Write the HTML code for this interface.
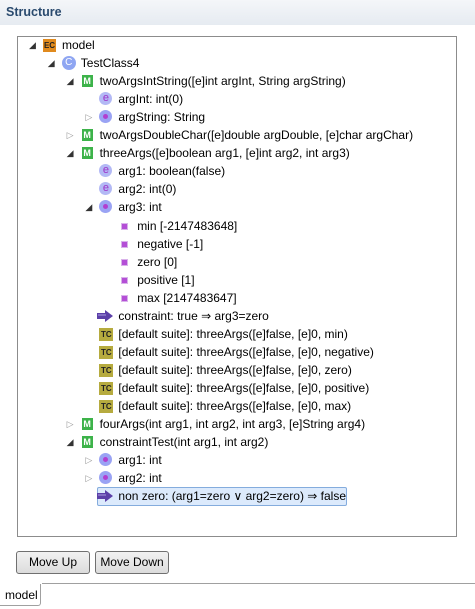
<!DOCTYPE html>
<html><head><style>
body{margin:0;width:475px;height:609px;background:#fff;font-family:"Liberation Sans",sans-serif;font-size:12px;color:#000;position:relative;overflow:hidden}
.hdr{position:absolute;left:0;top:0;width:475px;height:25px;background:linear-gradient(#f4f6f9,#e6ebf1);}
.hdr span{position:absolute;left:6px;top:5px;font-weight:bold;color:#2a4a6e;font-size:12.5px}
.tree{position:absolute;left:17px;top:36px;width:438px;height:499px;border:1px solid #8c8c8c;background:#fff}
.r{position:absolute;height:18px;line-height:18px;white-space:nowrap}
.ic{position:absolute;top:2px;width:14px;height:14px}
.tw{position:absolute;top:0;font-size:9px;line-height:18px}
.ex{color:#333}
.co{color:#999}
.ec{background:#e08a1e;color:#222;font-size:8px;font-weight:bold;line-height:13px;text-align:center;top:3px;width:13px;height:13px}
.c{border-radius:50%;background:#8fa6f2;color:#fff;font-size:10px;line-height:14px;text-align:center}
.m{background:#3db34a;color:#fff;font-size:9px;font-weight:bold;line-height:12px;text-align:center;width:11px;height:12px;top:3px;left:1px}
.e{border-radius:50%;background:#b3b9f5;color:#9d32c8;font-size:11px;line-height:12px;text-align:center;width:13px;height:13px}
.d{border-radius:50%;background:#9aa3f4;width:13px;height:13px}
.d:after{content:"";position:absolute;left:4px;top:4px;width:5px;height:5px;border-radius:50%;background:#b23fd0}
.sq{background:#b44fd6;width:7px;height:7px;top:6px;left:3px;border:1px solid #d9b2ea;box-sizing:border-box}
.tc{background:#b6ab3f;color:#222;font-size:8px;font-weight:bold;line-height:13px;text-align:center;width:14px;height:13px;top:3px}
.sel{position:absolute;left:97px;top:487px;width:248px;height:17px;background:#dceafc;border:1px solid #84acdd;border-radius:2px}
.btn{position:absolute;top:551px;height:21px;border:1px solid #707070;border-radius:3px;background:linear-gradient(#f2f2f2,#dcdcdc);text-align:center;line-height:21px;font-size:12px}
</style></head><body>
<div class="hdr"><span>Structure</span></div>
<div class="tree"></div>
<div class="sel"></div>
<div id="t"></div>
<div class="btn" style="left:16px;width:72px">Move Up</div>
<div class="btn" style="left:95px;width:72px">Move Down</div>
<div style="position:absolute;left:42px;top:583px;width:433px;border-top:1px solid #a0a0a0"></div>
<div style="position:absolute;left:0;top:584px;width:41px;height:22px;border-right:1px solid #a0a0a0;border-bottom:1px solid #a0a0a0;border-bottom-right-radius:3px;line-height:22px;padding-left:5px;box-sizing:border-box">model</div>
<script>
var rows=[
[0,'x','ec','model'],
[1,'x','c','TestClass4'],
[2,'x','m','twoArgsIntString([e]int argInt, String argString)'],
[3,'','e','argInt: int(0)'],
[3,'o','d','argString: String'],
[2,'o','m','twoArgsDoubleChar([e]double argDouble, [e]char argChar)'],
[2,'x','m','threeArgs([e]boolean arg1, [e]int arg2, int arg3)'],
[3,'','e','arg1: boolean(false)'],
[3,'','e','arg2: int(0)'],
[3,'x','d','arg3: int'],
[4,'','sq','min [-2147483648]'],
[4,'','sq','negative [-1]'],
[4,'','sq','zero [0]'],
[4,'','sq','positive [1]'],
[4,'','sq','max [2147483647]'],
[3,'','ar','constraint: true \u21D2 arg3=zero'],
[3,'','tc','[default suite]: threeArgs([e]false, [e]0, min)'],
[3,'','tc','[default suite]: threeArgs([e]false, [e]0, negative)'],
[3,'','tc','[default suite]: threeArgs([e]false, [e]0, zero)'],
[3,'','tc','[default suite]: threeArgs([e]false, [e]0, positive)'],
[3,'','tc','[default suite]: threeArgs([e]false, [e]0, max)'],
[2,'o','m','fourArgs(int arg1, int arg2, int arg3, [e]String arg4)'],
[2,'x','m','constraintTest(int arg1, int arg2)'],
[3,'o','d','arg1: int'],
[3,'o','d','arg2: int'],
[3,'','ar','non zero: (arg1=zero \u2228 arg2=zero) \u21D2 false']];
var h='';
rows.forEach(function(r,i){
 var top=36+i*18.05, tx=62+r[0]*18.8, ix=tx-19, ax=ix-14;
 h+='<div class="r" style="left:0;top:'+top+'px;width:475px">';
 if(r[1]=='x')h+='<span class="tw ex" style="left:'+ax+'px">&#9698;</span>';
 if(r[1]=='o')h+='<span class="tw co" style="left:'+ax+'px">&#9655;</span>';
 var t=r[2],inner='';
 if(t=='ec')inner='EC';if(t=='c')inner='C';if(t=='m')inner='M';if(t=='e')inner='e';if(t=='tc')inner='TC';
 if(t=='ar'){h+='<svg style="position:absolute;left:'+(ix-2)+'px;top:3px" width="17" height="12"><path d="M0 3H8V0L16 6L8 12V9H0Z" fill="#5b3fa8"/><path d="M1 5H9" stroke="#a99be0"/></svg>';}
 else h+='<span class="ic '+t+'" style="left:'+(ix+(t=='m'?1:0)+(t=='sq'?3:0))+'px">'+inner+'</span>';
 h+='<span style="position:absolute;left:'+tx+'px">'+r[3].replace(/</g,'&lt;')+'</span></div>';
});
document.getElementById('t').innerHTML=h;
</script>
</body></html>
